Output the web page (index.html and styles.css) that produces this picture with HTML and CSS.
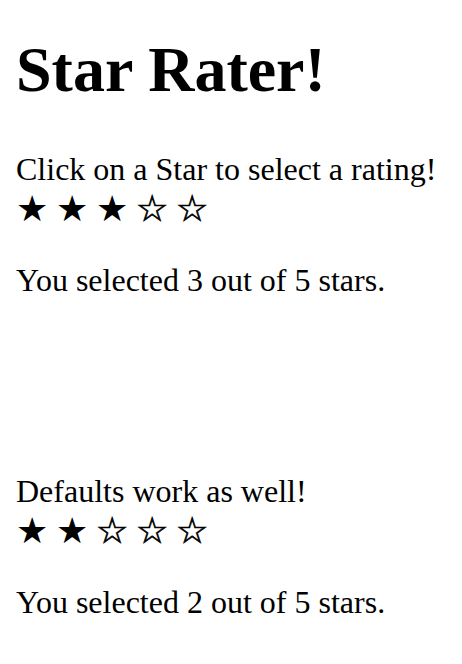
FILE: index.html
```html
<!DOCTYPE html>
<html>
<head>
<meta charset="utf-8">
<link rel="stylesheet" href="styles.css">
</head>
<body>
<div class="page">
  <h1 class="title">Star Rater!</h1>
  <section class="rater">
    <div class="prompt">Click on a Star to select a rating!</div>
    <div class="stars">
      <span class="star">★</span><span class="star">★</span><span class="star">★</span><span class="star empty">☆</span><span class="star empty">☆</span>
    </div>
    <p class="result">You selected 3 out of 5 stars.</p>
  </section>
  <section class="rater second">
    <div class="prompt">Defaults work as well!</div>
    <div class="stars">
      <span class="star">★</span><span class="star">★</span><span class="star empty">☆</span><span class="star empty">☆</span><span class="star empty">☆</span>
    </div>
    <p class="result">You selected 2 out of 5 stars.</p>
  </section>
</div>
</body>
</html>
```
FILE: styles.css
```css
html, body {
  margin: 0;
  padding: 0;
  background: #fff;
}
.page {
  padding: 0 16px;
  font-family: "Liberation Serif", "Times New Roman", serif;
  font-size: 32px;
  line-height: 37px;
  color: #000;
}
.title {
  font-size: 64px;
  line-height: 74px;
  font-weight: bold;
  margin: 33px 0 44px;
}
.rater {
  margin: 0;
}
.second {
  margin-top: 174px;
}
.stars {
  display: flex;
  height: 42px;
  align-items: center;
}
.star {
  display: inline-block;
  width: 40px;
  font-family: "DejaVu Sans", sans-serif;
  font-size: 36px;
  line-height: 42px;
}
.empty {
  -webkit-text-stroke: 0.7px #000;
}
.result {
  margin: 32px 0 0;
}
```
